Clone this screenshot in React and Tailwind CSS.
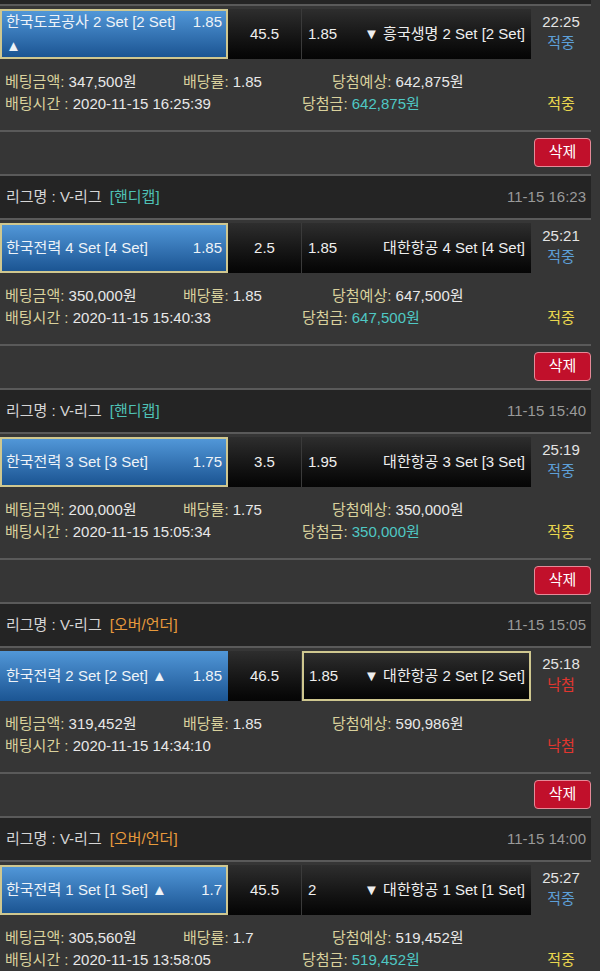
const BETS = [
  {
    cut: true,
    home: '한국도로공사 2 Set [2 Set]', homeArrow: true, homeOdds: '1.85',
    line: '45.5',
    awayOdds: '1.85', away: '흥국생명 2 Set [2 Set]', awayArrow: true,
    pick: 'home', time: '22:25', status: 'win',
    amount: '347,500원', odds: '1.85', expect: '642,875원',
    placed: '2020-11-15 16:25:39', payout: '642,875원',
  },
  {
    tag: '핸디캡', date: '11-15 16:23',
    home: '한국전력 4 Set [4 Set]', homeOdds: '1.85',
    line: '2.5',
    awayOdds: '1.85', away: '대한항공 4 Set [4 Set]',
    pick: 'home', time: '25:21', status: 'win',
    amount: '350,000원', odds: '1.85', expect: '647,500원',
    placed: '2020-11-15 15:40:33', payout: '647,500원',
  },
  {
    tag: '핸디캡', date: '11-15 15:40',
    home: '한국전력 3 Set [3 Set]', homeOdds: '1.75',
    line: '3.5',
    awayOdds: '1.95', away: '대한항공 3 Set [3 Set]',
    pick: 'home', time: '25:19', status: 'win',
    amount: '200,000원', odds: '1.75', expect: '350,000원',
    placed: '2020-11-15 15:05:34', payout: '350,000원',
  },
  {
    tag: '오버/언더', date: '11-15 15:05',
    home: '한국전력 2 Set [2 Set]', homeArrow: true, homeOdds: '1.85',
    line: '46.5',
    awayOdds: '1.85', away: '대한항공 2 Set [2 Set]', awayArrow: true,
    pick: 'away', time: '25:18', status: 'lose',
    amount: '319,452원', odds: '1.85', expect: '590,986원',
    placed: '2020-11-15 14:34:10',
  },
  {
    tag: '오버/언더', date: '11-15 14:00',
    home: '한국전력 1 Set [1 Set]', homeArrow: true, homeOdds: '1.7',
    line: '45.5',
    awayOdds: '2', away: '대한항공 1 Set [1 Set]', awayArrow: true,
    pick: 'home', time: '25:27', status: 'win',
    amount: '305,560원', odds: '1.7', expect: '519,452원',
    placed: '2020-11-15 13:58:05', payout: '519,452원',
  },
]

const Line = () => <div className="h-[2px] w-[591px] bg-[#5a5a5a]" />

function Header({ bet }) {
  if (bet.cut) return <div className="h-[4px] w-[591px] bg-[#242424]" />
  const tagColor = bet.tag === '핸디캡' ? 'text-[#4fc1b6]' : 'text-[#e89a3c]'
  return (
    <div className="flex h-[42px] w-[591px] items-center justify-between bg-[#242424] pl-[6px] pr-[5px] text-[15px]">
      <div className="text-[#d6d6d6]">
        리그명 : V-리그 <span className={`ml-1 ${tagColor}`}>[{bet.tag}]</span>
      </div>
      <div className="text-[#9a9a9a]">{bet.date}</div>
    </div>
  )
}

function BetRow({ bet }) {
  const homePicked = bet.pick === 'home'
  const awayPicked = bet.pick === 'away'
  return (
    <div className="mt-[3px] flex h-[50px] w-[591px] text-[15px]">
      {/* home */}
      <div
        className={`flex w-[228px] items-center bg-linear-to-b from-[#5197d8] to-[#1b5593] text-[#eef3f8] ${
          homePicked ? 'border-2 border-[#cfc78f] pl-[4px] pr-[4px]' : 'pl-[6px] pr-[6px]'
        }`}
      >
        <div className="w-full leading-[24px]">
          <span className="float-right">{bet.homeOdds}</span>
          {bet.home}
          {bet.homeArrow && <span> ▲</span>}
        </div>
      </div>
      {/* handicap / total */}
      <div className="flex w-[74px] items-center justify-center border-r border-[#3a3a3a] bg-linear-to-b from-[#2e2e2e] to-[#050505] text-[#eeeeee]">
        {bet.line}
      </div>
      {/* away */}
      <div
        className={`flex w-[229px] items-center justify-between bg-linear-to-b from-[#2e2e2e] to-[#050505] text-[#eeeeee] ${
          awayPicked ? 'border-2 border-[#cfc78f] pl-[5px] pr-[4px]' : 'pl-[6px] pr-[6px]'
        }`}
      >
        <span>{bet.awayOdds}</span>
        <span>
          {bet.awayArrow && '▼ '}
          {bet.away}
        </span>
      </div>
      {/* time / status */}
      <div className="flex w-[60px] flex-col items-center pt-[2px] leading-[21px]">
        <span className="text-[#e4e4e4]">{bet.time}</span>
        <span className={bet.status === 'win' ? 'text-[#5d9fd8]' : 'text-[#e2362f]'}>
          {bet.status === 'win' ? '적중' : '낙첨'}
        </span>
      </div>
    </div>
  )
}

function Info({ bet }) {
  const label = 'text-[#d9d19c]'
  const value = 'text-[#e8e8e8]'
  return (
    <div className="w-[591px] pt-[12px] pb-[15px] text-[15px] leading-[22px]">
      <div className="flex">
        <div className="w-[183px] pl-[5px]">
          <span className={label}>베팅금액:</span> <span className={value}>{bet.amount}</span>
        </div>
        <div className="w-[149px]">
          <span className={label}>배당률:</span> <span className={value}>{bet.odds}</span>
        </div>
        <div>
          <span className={label}>당첨예상:</span> <span className={value}>{bet.expect}</span>
        </div>
      </div>
      <div className="flex">
        <div className="w-[302px] pl-[5px]">
          <span className={label}>배팅시간 :</span> <span className={value}>{bet.placed}</span>
        </div>
        <div className="w-[229px]">
          {bet.payout && (
            <>
              <span className={label}>당첨금:</span> <span className="text-[#4fc8c4]">{bet.payout}</span>
            </>
          )}
        </div>
        <div className={`w-[60px] text-center ${bet.status === 'win' ? 'text-[#e9d64e]' : 'text-[#e2362f]'}`}>
          {bet.status === 'win' ? '적중' : '낙첨'}
        </div>
      </div>
    </div>
  )
}

function DeleteBar() {
  return (
    <div className="flex w-[591px] justify-end pt-[6px] pb-[7px]">
      <button className="h-[29px] w-[57px] rounded-[4px] border border-[#e58a98] bg-[#c1102b] text-[15px] text-white">
        삭제
      </button>
    </div>
  )
}

export default function App() {
  return (
    <div className="h-[971px] w-[600px] overflow-hidden bg-[#363636] font-[Liberation_Sans,Noto_Sans_CJK_KR,sans-serif]">
      {BETS.map((bet, i) => (
        <div key={i}>
          <Header bet={bet} />
          <Line />
          <BetRow bet={bet} />
          <Info bet={bet} />
          <Line />
          <DeleteBar />
          <Line />
        </div>
      ))}
    </div>
  )
}
